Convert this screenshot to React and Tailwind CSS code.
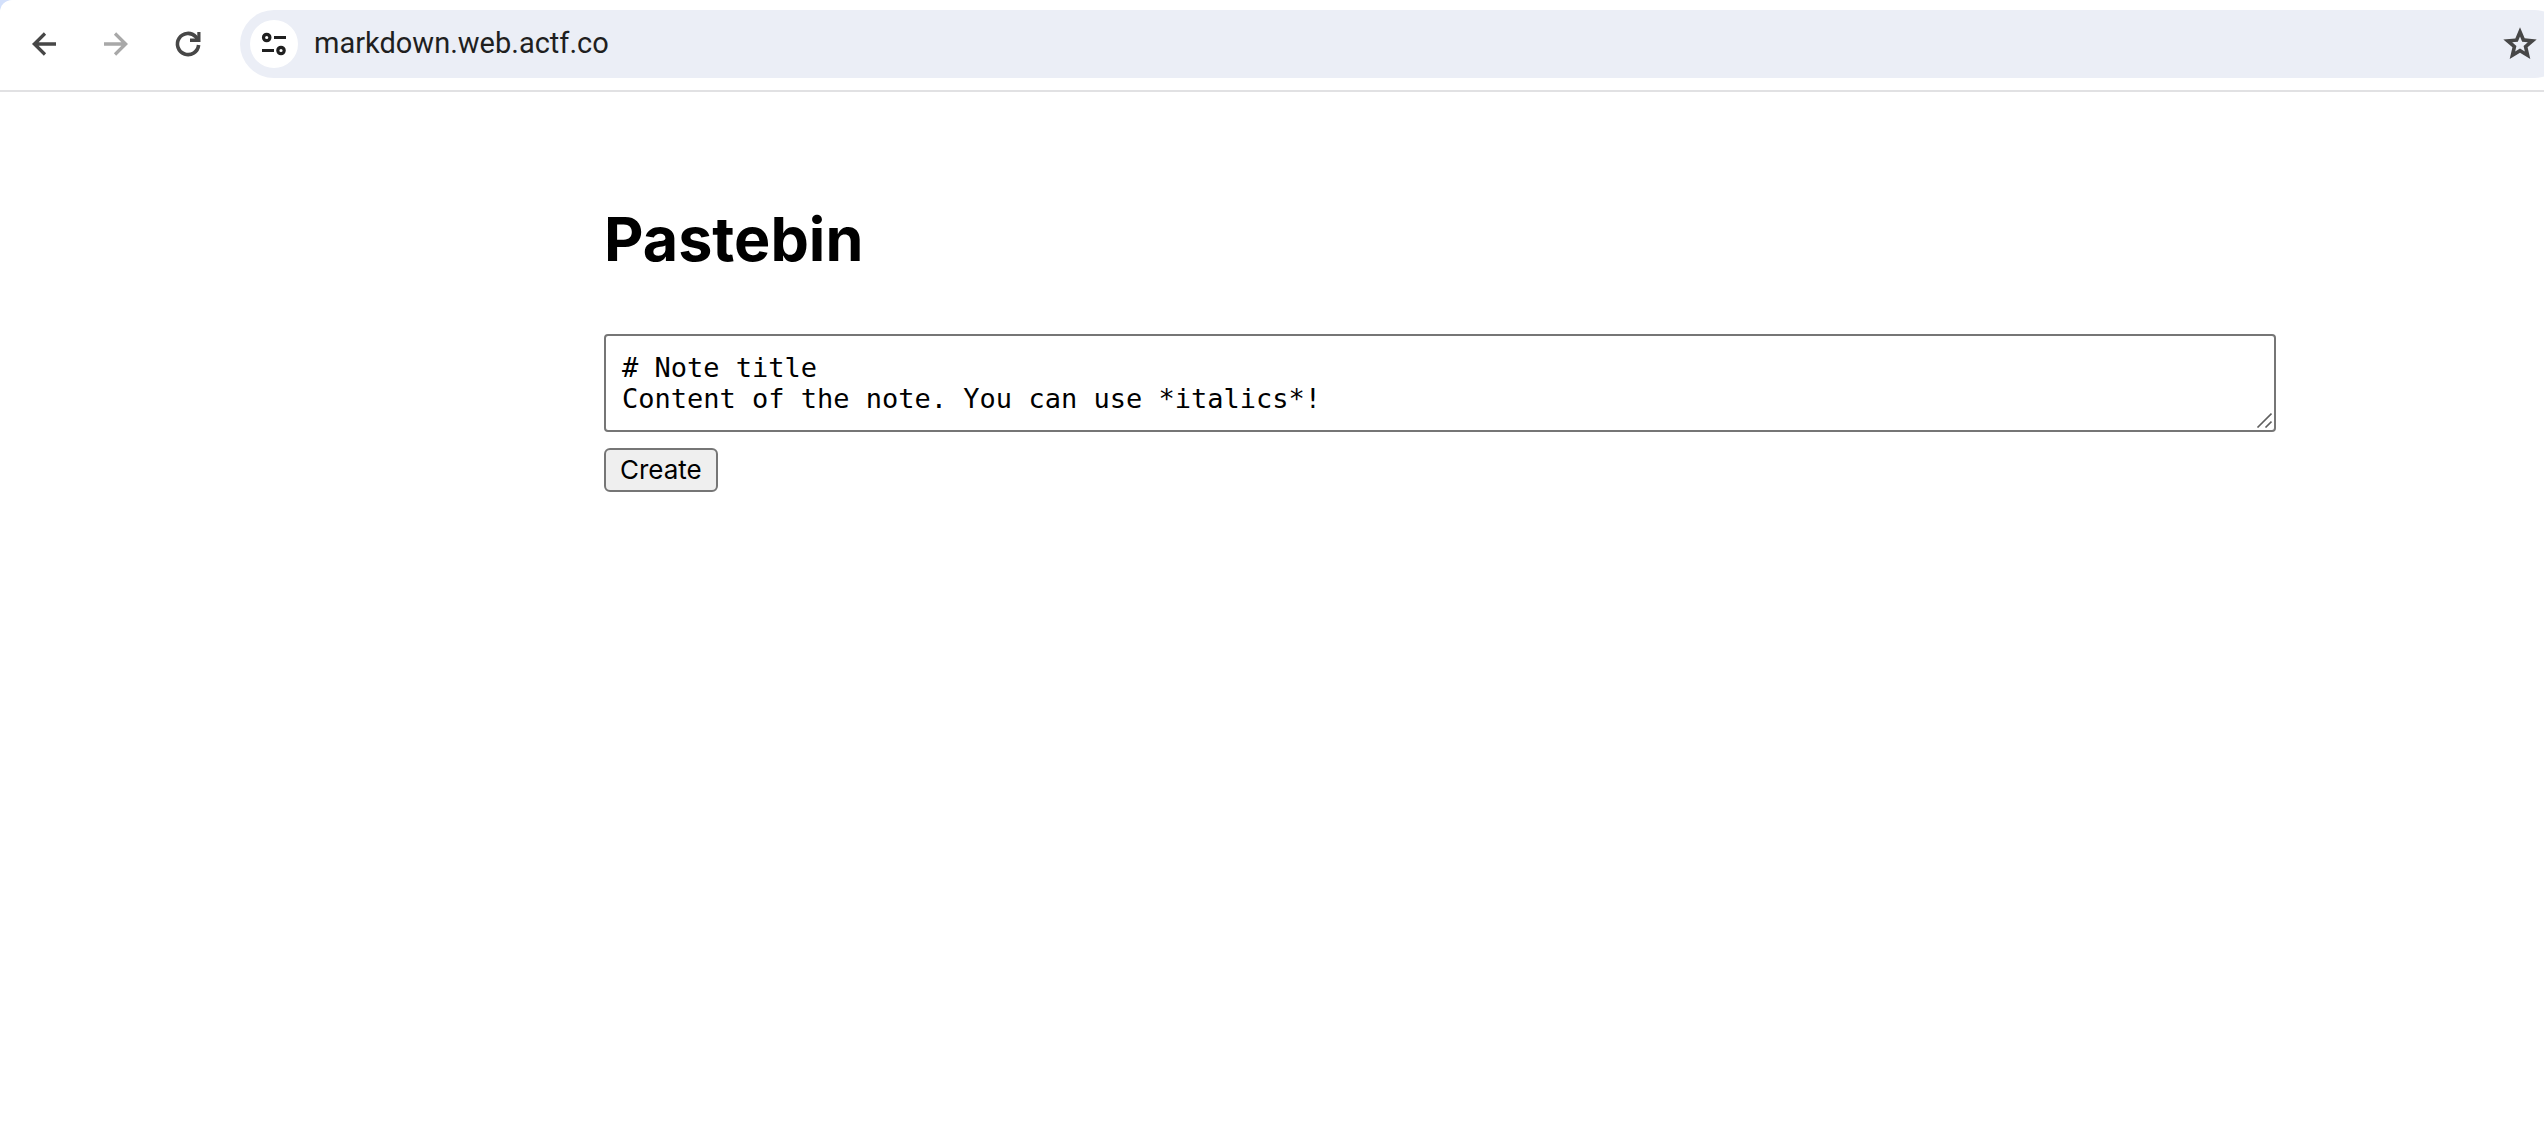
function BackIcon() {
  return (
    <svg viewBox="0 0 24 24" className="size-9" fill="currentColor" aria-hidden="true">
      <path d="M20 10.8H8.4l5-5L11.9 4.2 4 12l7.9 7.8 1.5-1.6-5-5H20z" />
    </svg>
  );
}

function ForwardIcon() {
  return (
    <svg viewBox="0 0 24 24" className="size-9" fill="currentColor" aria-hidden="true">
      <path d="M4 10.8h11.6l-5-5 1.5-1.6L20 12l-7.9 7.8-1.5-1.6 5-5H4z" />
    </svg>
  );
}

function ReloadIcon() {
  return (
    <svg viewBox="0 0 36 36" className="size-9" fill="none" stroke="currentColor" strokeWidth="3.6" aria-hidden="true">
      <path d="M28.6 19A10.6 10.6 0 1 1 25.8 10.8L28 13.5" />
      <path d="M20 16h10.5V6h-3.2v6.6H20z" fill="currentColor" stroke="none" />
    </svg>
  );
}

function TuneIcon() {
  return (
    <svg viewBox="0 0 48 48" className="size-12" fill="none" stroke="currentColor" strokeWidth="3.2" aria-hidden="true">
      <circle cx="16.7" cy="17.5" r="3.2" />
      <circle cx="31" cy="30.5" r="3.2" />
      <path d="M24 17.5h12M12 30.5h12" />
    </svg>
  );
}

function StarIcon() {
  return (
    <svg viewBox="0 0 24 24" className="size-10" fill="currentColor" aria-hidden="true">
      <path d="M22 9.24l-7.19-.62L12 2 9.19 8.63 2 9.24l5.46 4.73L5.82 21 12 17.27 18.18 21l-1.63-7.03L22 9.24zM12 14.7l-2.9 1.75.75-3.3-2.55-2.25 3.4-.3L12 7.5l1.3 3.1 3.4.3-2.55 2.25.75 3.3L12 14.7z" />
    </svg>
  );
}

function ResizeGrip() {
  return (
    <svg
      viewBox="0 0 16 16"
      className="pointer-events-none absolute right-1 bottom-1 size-4"
      fill="none"
      stroke="#5f5f5f"
      strokeWidth="1.6"
      aria-hidden="true"
    >
      <path d="M1.5 15.5 15.5 1.5M9.5 15.5 15.5 9.5" />
    </svg>
  );
}

export default function App() {
  return (
    <div className="min-h-screen overflow-x-hidden bg-white font-['Inter',sans-serif] text-black">
      <div className="bg-[#d3e0fb]">
        <header className="flex items-center overflow-hidden rounded-tl-xl border-b-2 border-[#e1e1e3] bg-white pt-2.5 pb-3 pl-[26px] text-[#474747]">
          <button type="button" aria-label="Back"><BackIcon /></button>
          <button type="button" aria-label="Forward" disabled className="ml-9 text-[#a8a8a8]"><ForwardIcon /></button>
          <button type="button" aria-label="Reload" className="ml-9"><ReloadIcon /></button>
          <div className="-mr-6 ml-[34px] flex h-[68px] flex-1 items-center rounded-full bg-[#ebeef6] pr-7 pl-2.5">
            <button type="button" aria-label="View site information" className="rounded-full bg-white text-[#1f1f1f]"><TuneIcon /></button>
            <input
              type="text"
              aria-label="Address"
              defaultValue="markdown.web.actf.co"
              className="ml-4 min-w-0 flex-1 bg-transparent font-['Roboto',sans-serif] text-[29px] text-[#1f1f1f] outline-none"
            />
            <button type="button" aria-label="Bookmark this tab"><StarIcon /></button>
          </div>
        </header>
      </div>
      <main className="mr-[268px] ml-[604px] pt-[107px]">
        <h1 className="text-[61px] leading-20 font-bold">Pastebin</h1>
        <form className="mt-[55px] flex flex-col items-start gap-4">
          <div className="relative flex w-full">
            <textarea
              aria-label="Note"
              rows={2}
              defaultValue={"# Note title\nContent of the note. You can use *italics*!"}
              className="w-full resize-none rounded border-2 border-[#767676] bg-white p-4 font-['DejaVu_Sans_Mono',monospace] text-[27px] leading-[31px] outline-none"
            />
            <ResizeGrip />
          </div>
          <button type="button" className="rounded-md border-2 border-[#767676] bg-[#efefef] px-3.5 text-[26px] leading-10">
            Create
          </button>
        </form>
      </main>
    </div>
  );
}
